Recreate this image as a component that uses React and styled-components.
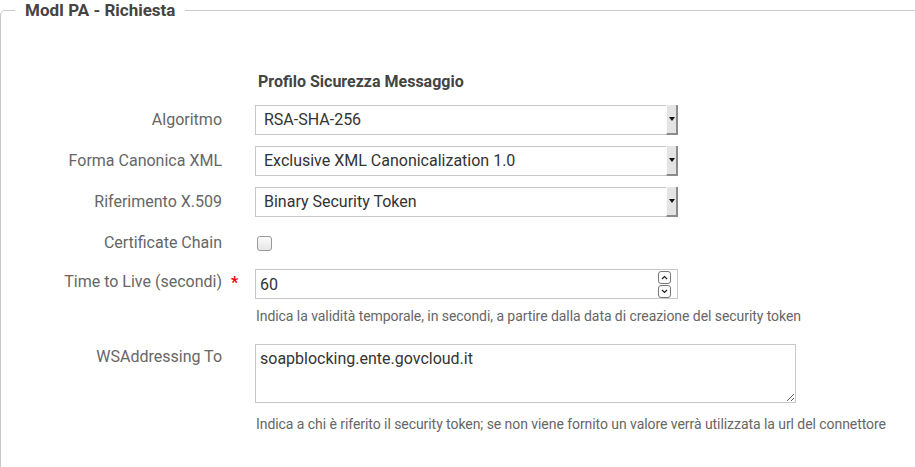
import React from 'react'
import styled, { createGlobalStyle } from 'styled-components'

const GlobalStyle = createGlobalStyle`
  html, body {
    margin: 0;
    padding: 0;
    background: #fff;
    overflow: hidden;
  }
  body {
    font-family: Roboto, "Liberation Sans", sans-serif;
  }
`

const Fieldset = styled.fieldset`
  margin: 0;
  padding: 0 0 60px 0;
  width: 960px;
  border: 1px solid #c9c9c9;
  border-radius: 5px;
  min-width: 0;
`

const Legend = styled.legend`
  margin-left: 14px;
  padding: 0 10px;
  font-size: 17px;
  font-weight: bold;
  color: #444;
  line-height: 20px;
`

const SectionTitle = styled.div`
  margin: 52px 0 13px 257px;
  font-size: 16px;
  font-weight: bold;
  color: #444;
  line-height: 20px;
`

const Form = styled.div`
  display: flex;
  flex-direction: column;
`

const Row = styled.div`
  display: grid;
  grid-template-columns: 221px 33px 1fr;
  align-items: ${p => (p.$top ? 'start' : 'center')};
  margin-bottom: ${p => p.$gap ?? 11}px;
  min-height: 30px;
`

const Label = styled.div`
  text-align: right;
  font-size: 16px;
  color: #666;
  line-height: 20px;
  padding-top: ${p => (p.$top ? '3px' : '0')};
`

const Star = styled.span`
  color: #e00;
  font-size: 16px;
  font-weight: bold;
  padding-left: 9px;
  padding-top: 4px;
  line-height: 20px;
`

const Control = styled.div`
  display: flex;
  flex-direction: column;
`

const SelectBox = styled.div`
  display: flex;
  width: 423px;
  height: 30px;
  box-sizing: border-box;
  border: 1px solid #c8c8c8;
  background: #fff;
  font-size: 16px;
  color: #333;
`

const SelectValue = styled.span`
  flex: 1;
  padding-left: 8px;
  line-height: 28px;
`

const ArrowButton = styled.span`
  width: 12px;
  display: flex;
  align-items: center;
  justify-content: center;
  background: #e4e4e4;
  border-left: 1px solid #fafafa;
  border-right: 2px solid #8c8c8c;
  border-bottom: 2px solid #8c8c8c;
  box-sizing: border-box;
  margin: -1px -1px -1px 0;
  &::after {
    content: '';
    border-left: 3px solid transparent;
    border-right: 3px solid transparent;
    border-top: 4px solid #111;
  }
`

const Checkbox = styled.span`
  display: block;
  width: 13px;
  height: 13px;
  margin-left: 2px;
  border: 1px solid #9a9a9a;
  border-radius: 3px;
  background: linear-gradient(#fbfbfb, #e6e6e6);
`

const NumberBox = styled.div`
  display: flex;
  align-items: center;
  width: 423px;
  height: 30px;
  box-sizing: border-box;
  border: 1px solid #c8c8c8;
  padding: 0 6px 0 4px;
  font-size: 16px;
  color: #333;
`

const NumberValue = styled.span`
  flex: 1;
`

const Spinner = styled.div`
  display: flex;
  flex-direction: column;
  gap: 1px;
`

const SpinButton = styled.span`
  width: 11px;
  height: 11px;
  border: 1px solid #777;
  border-radius: 3px;
  display: flex;
  align-items: center;
  justify-content: center;
  background: #fafafa;
`

const TextArea = styled.textarea`
  width: 541px;
  height: 59px;
  box-sizing: border-box;
  border: 1px solid #c8c8c8;
  padding: 4px 4px;
  font-family: Roboto, "Liberation Sans", sans-serif;
  font-size: 16px;
  color: #333;
  line-height: 19px;
  outline: none;
`

const Help = styled.div`
  margin-top: ${p => p.$mt}px;
  padding-left: 1px;
  font-size: 14px;
  color: #666;
  line-height: 18px;
  letter-spacing: -0.06px;
`

const Chevron = ({ up }) => (
  <svg width="7" height="5" viewBox="0 0 7 5">
    <path
      d={up ? 'M1 4 L3.5 1.5 L6 4' : 'M1 1 L3.5 3.5 L6 1'}
      fill="none"
      stroke="#222"
      strokeWidth="1.2"
    />
  </svg>
)

const selects = [
  { label: 'Algoritmo', value: 'RSA-SHA-256' },
  { label: 'Forma Canonica XML', value: 'Exclusive XML Canonicalization 1.0' },
  { label: 'Riferimento X.509', value: 'Binary Security Token' },
]

function App() {
  return (
    <React.Fragment>
      <GlobalStyle />
      <Fieldset>
        <Legend>ModI PA - Richiesta</Legend>
        <SectionTitle>Profilo Sicurezza Messaggio</SectionTitle>
        <Form>
          {selects.map(s => (
            <Row key={s.label}>
              <Label>{s.label}</Label>
              <span />
              <SelectBox>
                <SelectValue>{s.value}</SelectValue>
                <ArrowButton />
              </SelectBox>
            </Row>
          ))}
          <Row>
            <Label>Certificate Chain</Label>
            <span />
            <Checkbox />
          </Row>
          <Row $top $gap={19}>
            <Label $top>Time to Live (secondi)</Label>
            <Star>*</Star>
            <Control>
              <NumberBox>
                <NumberValue>60</NumberValue>
                <Spinner>
                  <SpinButton>
                    <Chevron up />
                  </SpinButton>
                  <SpinButton>
                    <Chevron />
                  </SpinButton>
                </Spinner>
              </NumberBox>
              <Help $mt={8}>
                Indica la validità temporale, in secondi, a partire dalla data di creazione del security token
              </Help>
            </Control>
          </Row>
          <Row $top>
            <Label $top>WSAddressing To</Label>
            <span />
            <Control>
              <TextArea defaultValue="soapblocking.ente.govcloud.it" readOnly />
              <Help $mt={12}>
                Indica a chi è riferito il security token; se non viene fornito un valore verrà utilizzata la url del connettore
              </Help>
            </Control>
          </Row>
        </Form>
      </Fieldset>
    </React.Fragment>
  )
}

export default App
